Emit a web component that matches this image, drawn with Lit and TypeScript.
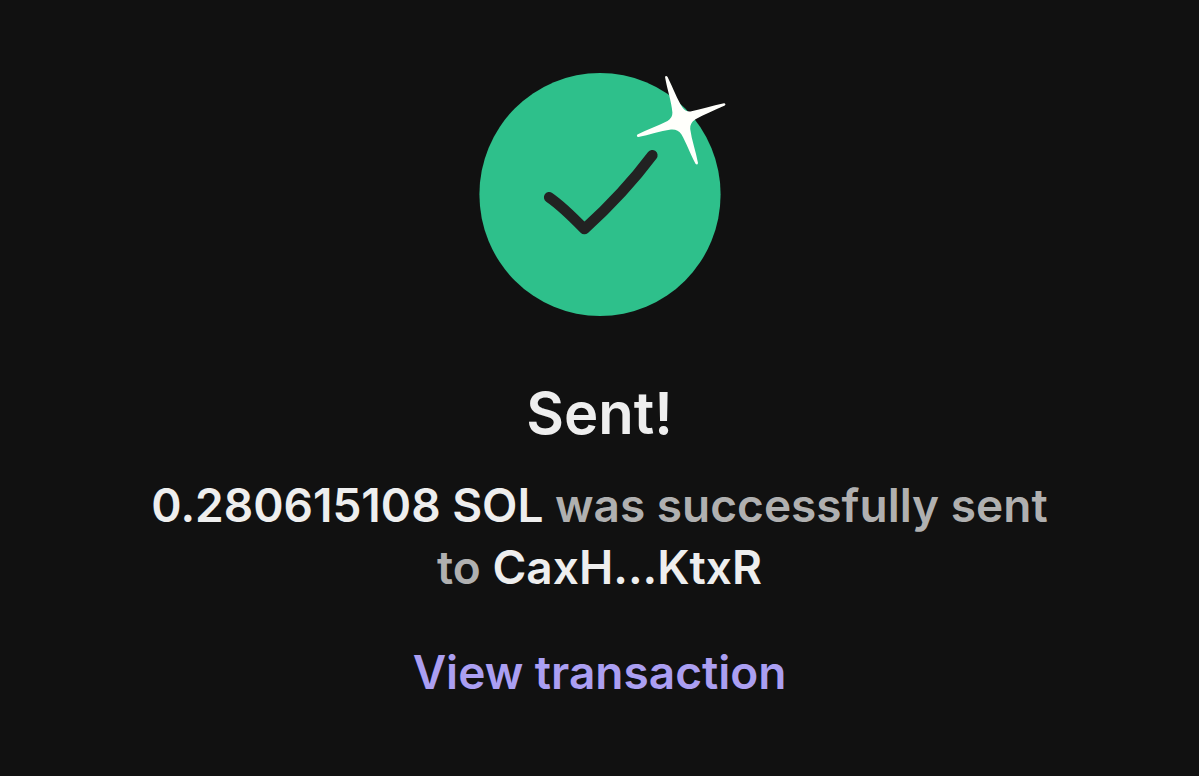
import { LitElement, html, css } from "lit";
import { customElement, property } from "lit/decorators.js";

@customElement("success-badge")
export class SuccessBadge extends LitElement {
  static styles = css`
    :host {
      display: block;
    }
    .badge {
      display: block;
      width: 242px;
      height: 244px;
      overflow: visible;
    }
    .disc {
      fill: #2ec08b;
    }
    .check {
      fill: none;
      stroke: #222;
      stroke-width: 10.6;
      stroke-linecap: round;
      stroke-linejoin: round;
    }
    .spark {
      fill: #fffffb;
    }
  `;

  render() {
    return html`
      <svg class="badge" viewBox="479 72 242 244" aria-hidden="true">
        <ellipse class="disc" cx="600" cy="194.5" rx="120.6" ry="121.6" />
        <path class="check" d="M549.2 197.3 Q562 206 584.4 229 Q624 193 652.3 155.2" />
        <path
          class="spark"
          d="M665 76.8 Q666.2 75.2 667.6 77 C673 88 677.5 100 682.5 107.5 Q685.8 112.2 691.5 111.2 C701 109.4 712 105.6 724 103.2 Q726.4 103.8 724.8 105.6 C714 110.6 704 114.4 695.5 119.2 Q689.6 122.8 690.2 129 C691.5 140 696 151.5 698 163 Q697.4 165.6 695.5 163.8 C689.5 152 686.5 143.5 681.5 134.5 Q678 129 671 129.5 C660 130.8 649 135 638.4 137 Q636 136.4 637.4 134.4 C647 129.4 658 126.2 667.5 121 Q672.6 118 672.4 112.5 C671.5 101.5 667 89 665 76.8 Z"
        />
      </svg>
    `;
  }
}

@customElement("app-root")
export class AppRoot extends LitElement {
  static styles = css`
    :host {
      display: block;
      min-height: 100vh;
      background: #111;
      color: #eee;
      font-family: Inter, "Liberation Sans", sans-serif;
    }
    .panel {
      display: flex;
      flex-direction: column;
      align-items: center;
      box-sizing: border-box;
      padding: 72px 128px 64px;
      text-align: center;
    }
    .title {
      margin: 61px 0 0;
      font-size: 58px;
      line-height: 72px;
      font-weight: 600;
    }
    .summary {
      margin: 25px 0 0;
      font-size: 46px;
      line-height: 62px;
      font-weight: 600;
      color: #b0b0b0;
    }
    .strong {
      color: #eee;
    }
    .link {
      margin-top: 43px;
      font-size: 46px;
      line-height: 62px;
      font-weight: 600;
      color: #ab9ff2;
      text-decoration: none;
    }
  `;

  @property() amount = "0.280615108 SOL";
  @property() recipient = "CaxH...KtxR";

  render() {
    return html`
      <main class="panel">
        <success-badge></success-badge>
        <h1 class="title">Sent!</h1>
        <p class="summary">
          <span class="strong">${this.amount}</span>
          <span>was successfully sent</span>
          <span>to</span>
          <span class="strong">${this.recipient}</span>
        </p>
        <a class="link" href="#transaction">View transaction</a>
      </main>
    `;
  }
}
